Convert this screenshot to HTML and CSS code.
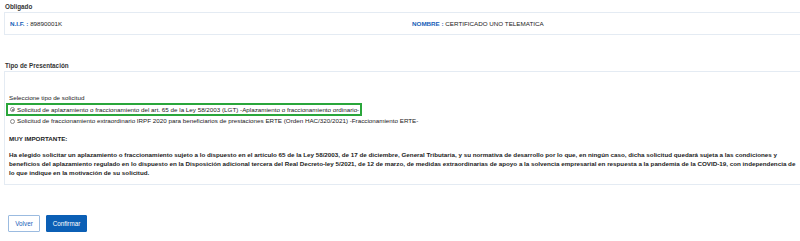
FILE: index.html
```html
<!DOCTYPE html>
<html lang="es">
<head>
<meta charset="utf-8">
<title>Aplazamiento</title>
<link rel="stylesheet" href="styles.css">
</head>
<body>
<div class="page">
  <div class="section-title">Obligado</div>
  <div class="panel panel-obligado">
    <div class="field"><span class="label">N.I.F. :</span> 89890001K</div>
    <div class="field"><span class="label">NOMBRE :</span> CERTIFICADO UNO TELEMATICA</div>
  </div>

  <div class="section-title title-tipo">Tipo de Presentación</div>
  <div class="panel panel-tipo">
    <div class="select-label">Seleccione tipo de solicitud</div>
    <div class="options">
      <div class="option selected"><span class="radio checked"></span>Solicitud de aplazamiento o fraccionamiento del art. 65 de la Ley 58/2003 (LGT) -Aplazamiento o fraccionamiento ordinario-</div>
      <div class="option"><span class="radio"></span>Solicitud de fraccionamiento extraordinario IRPF 2020 para beneficiarios de prestaciones ERTE (Orden HAC/320/2021) -Fraccionamiento ERTE-</div>
    </div>
    <div class="important">MUY IMPORTANTE:</div>
    <p class="notice">Ha elegido solicitar un aplazamiento o fraccionamiento sujeto a lo dispuesto en el artículo 65 de la Ley 58/2003, de 17 de diciembre, General Tributaria, y su normativa de desarrollo por lo que, en ningún caso, dicha solicitud quedará sujeta a las condiciones y beneficios del aplazamiento regulado en lo dispuesto en la Disposición adicional tercera del Real Decreto-ley 5/2021, de 12 de marzo, de medidas extraordinarias de apoyo a la solvencia empresarial en respuesta a la pandemia de la COVID-19, con independencia de lo que indique en la motivación de su solicitud.</p>
  </div>

  <div class="actions">
    <button class="btn btn-secondary">Volver</button>
    <button class="btn btn-primary">Confirmar</button>
  </div>
</div>
</body>
</html>
```
FILE: styles.css
```css
* { box-sizing: border-box; }
html, body { margin: 0; padding: 0; background: #fff; }
body {
  font-family: "Liberation Sans", Arial, sans-serif;
  font-size: 6.25px;
  color: #222;
}
.page { width: 800px; height: 241px; overflow: hidden; padding-top: 3px; }
.section-title {
  font-weight: bold;
  color: #333;
  padding-left: 5px;
  height: 9px;
  line-height: 7px;
  font-size: 6.3px;
}
.title-tipo { margin-top: 27px; }
.panel {
  margin-left: 4px;
  border: 1px solid #e4ebf3;
  border-right: none;
}
.panel-obligado {
  height: 23px;
  display: grid;
  grid-template-columns: 402px 1fr;
  align-items: center;
  padding-left: 5px;
}
.label { color: #1660b8; font-weight: bold; }
.panel-tipo { height: 114px; padding: 22px 0 0 1px; }
.select-label { padding-left: 3px; height: 9px; line-height: 8px; }
.option {
  display: flex;
  align-items: center;
  height: 10px;
  line-height: 10px;
  padding-left: 4px;
  white-space: nowrap;
}
.option.selected {
  width: 356px;
  height: 13px;
  border: 2px solid #2aa63b;
  padding-left: 2px;
}
.radio {
  width: 5px; height: 5px;
  border: 0.7px solid #8a8a8a;
  border-radius: 50%;
  margin-right: 2px;
  flex: none;
  display: inline-block;
  position: relative;
}
.radio.checked::after {
  content: "";
  position: absolute;
  left: 1px; top: 1px;
  width: 2px; height: 2px;
  border-radius: 50%;
  background: #666;
}
.important { font-weight: bold; margin-top: 9px; padding-left: 3px; line-height: 8px; }
.notice {
  font-weight: bold;
  margin: 7px 0 0 0;
  padding: 0 4px 0 3px;
  line-height: 9px;
}
.actions { display: flex; gap: 6px; margin-top: 30px; padding-left: 8px; }
.btn {
  font-family: "Liberation Sans", Arial, sans-serif;
  font-size: 6.3px;
  height: 17px;
  border-radius: 1px;
  padding: 0;
}
.btn-secondary { width: 32px; background: #fff; color: #1660b8; border: 1px solid #9bbbe0; }
.btn-primary { width: 41px; background: #0b5fb5; color: #fff; border: 1px solid #0b5fb5; }
```
